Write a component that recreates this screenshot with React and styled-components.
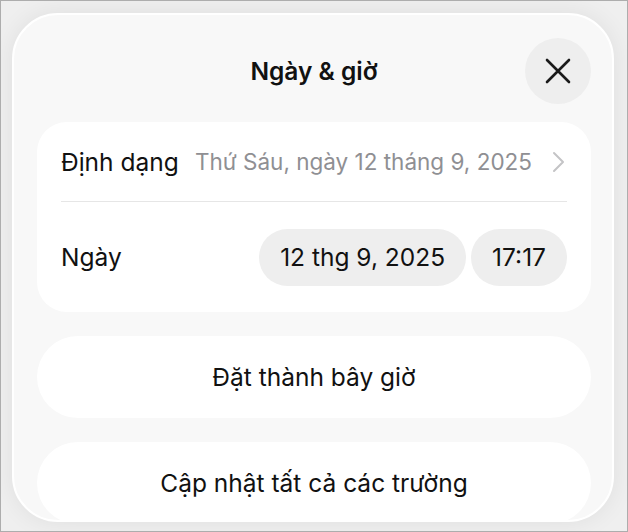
import React from 'react';
import styled, { createGlobalStyle } from 'styled-components';

const Global = createGlobalStyle`
  html, body {
    margin: 0;
    padding: 0;
  }
  body {
    font-family: Inter, "Noto Sans", "Liberation Sans", sans-serif;
    -webkit-font-smoothing: antialiased;
  }
`;

const Frame = styled.div`
  width: 628px;
  height: 532px;
  box-sizing: border-box;
  border: 1px solid #adadad;
  background: #efefef;
  padding: 12px 13px 9px 11px;
  overflow: hidden;
`;

const Sheet = styled.div`
  height: 100%;
  box-sizing: border-box;
  background: #f8f8f8;
  border: 2px solid #ffffff;
  border-radius: 46px;
  box-shadow: 0 0 24px rgba(0, 0, 0, 0.07);
  overflow: hidden;
  padding: 23px 21px 0 23px;
  display: flex;
  flex-direction: column;
  gap: 24px;
`;

const Header = styled.header`
  display: grid;
  grid-template-columns: 66px 1fr 66px;
  align-items: center;
  margin-bottom: -6px;
`;

const Title = styled.h1`
  grid-column: 2;
  margin: 0;
  text-align: center;
  font-size: 24.5px;
  font-weight: 600;
  color: #111;
`;

const CloseButton = styled.button`
  grid-column: 3;
  width: 66px;
  height: 66px;
  border: none;
  border-radius: 50%;
  background: #eeeeee;
  display: flex;
  align-items: center;
  justify-content: center;
  padding: 0;
`;

const Card = styled.section`
  background: #fff;
  border-radius: 30px;
  padding: 0 24px;
`;

const Row = styled.div`
  display: flex;
  align-items: center;
  justify-content: space-between;
  height: ${p => p.$h}px;
  gap: 5px;
  & + & {
    border-top: 1px solid #e6e6e6;
  }
`;

const Label = styled.span`
  font-size: 24.5px;
  color: #111;
  flex: 1;
  white-space: nowrap;
`;

const Value = styled.span`
  font-size: 22.5px;
  color: #8f8f93;
  white-space: nowrap;
`;

const Pill = styled.span`
  display: inline-flex;
  align-items: center;
  justify-content: center;
  height: 57px;
  padding: 0 21px;
  border-radius: 29px;
  background: #eeeeee;
  font-size: 24.5px;
  color: #111;
`;

const ActionButton = styled.button`
  flex-shrink: 0;
  height: 82px;
  border: none;
  border-radius: 41px;
  background: #fff;
  font-family: inherit;
  font-size: 24.5px;
  color: #111;
  text-align: center;
`;

const Chevron = () => (
  <svg width="16" height="24" viewBox="0 0 16 24" fill="none" style={{ marginLeft: 14 }}>
    <path d="M3 3l9 9-9 9" stroke="#c4c4c6" strokeWidth="2" strokeLinecap="round" strokeLinejoin="round" />
  </svg>
);

const XIcon = () => (
  <svg width="28" height="28" viewBox="0 0 28 28" fill="none">
    <path d="M3 3l22 22M25 3L3 25" stroke="#1a1a1a" strokeWidth="2.6" strokeLinecap="round" />
  </svg>
);

export default function App() {
  return (
    <>
      <Global />
      <Frame>
        <Sheet>
          <Header>
            <Title>Ngày &amp; giờ</Title>
            <CloseButton aria-label="Đóng">
              <XIcon />
            </CloseButton>
          </Header>
          <Card>
            <Row $h={79}>
              <Label>Định dạng</Label>
              <Value>Thứ Sáu, ngày 12 tháng 9, 2025</Value>
              <Chevron />
            </Row>
            <Row $h={110}>
              <Label>Ngày</Label>
              <Pill>12 thg 9, 2025</Pill>
              <Pill>17:17</Pill>
            </Row>
          </Card>
          <ActionButton>Đặt thành bây giờ</ActionButton>
          <ActionButton>Cập nhật tất cả các trường</ActionButton>
        </Sheet>
      </Frame>
    </>
  );
}
